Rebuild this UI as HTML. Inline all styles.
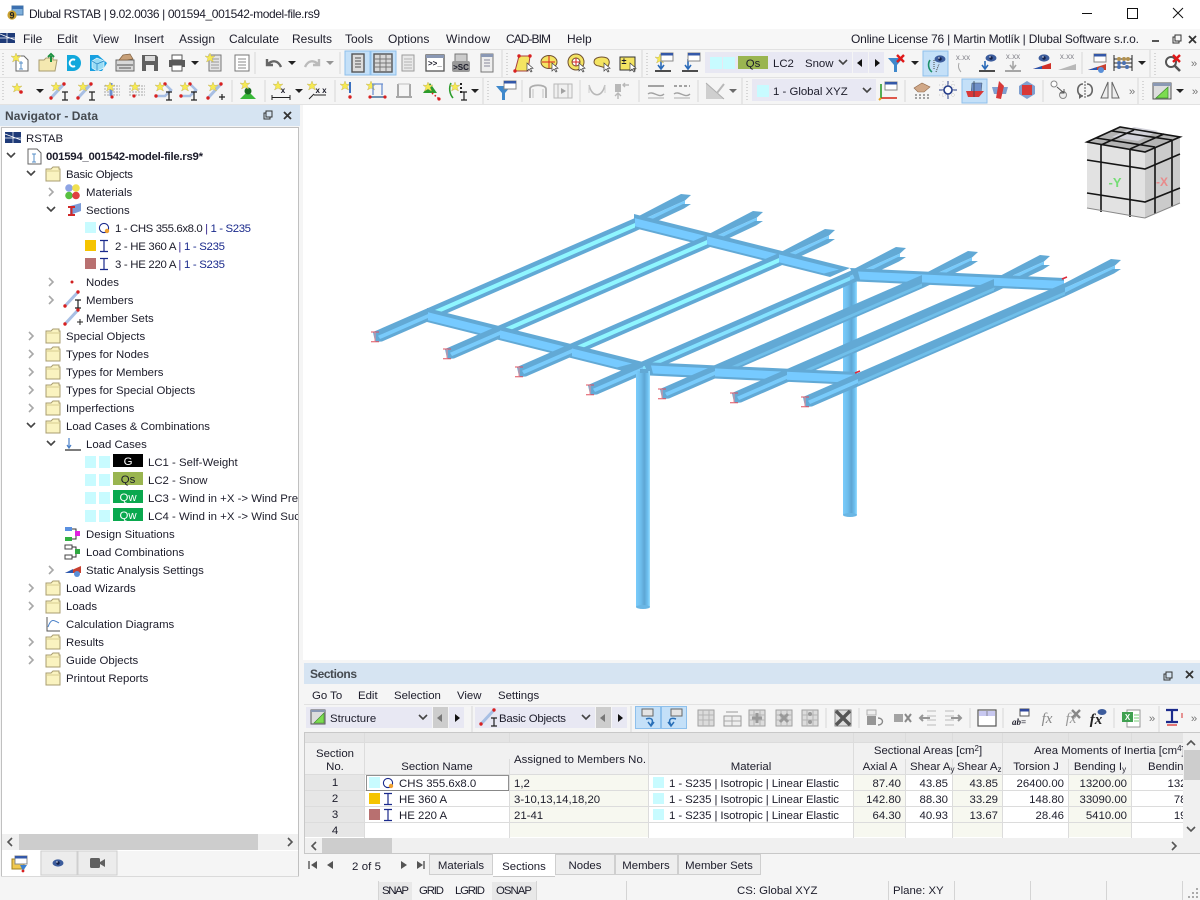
<!DOCTYPE html>
<html><head><meta charset="utf-8"><title>Dlubal RSTAB</title>
<style>
html,body{margin:0;padding:0;background:#f5f5f5;overflow:hidden}
svg{display:block}
text{font-family:"Liberation Sans",sans-serif;font-size:11.4px;fill:#1c1c2a}
.c{text-anchor:middle}.r{text-anchor:end}
.g{fill:#b4b4b4}.gs{stroke:#a8a8a8;fill:none}
</style></head><body>
<svg xmlns="http://www.w3.org/2000/svg" width="1200" height="900" viewBox="0 0 1200 900">
<defs>
<clipPath id="navclip"><rect x="0" y="128" width="298" height="705"/></clipPath>
<clipPath id="tblclip"><rect x="304" y="733" width="879" height="105"/></clipPath>
<linearGradient id="col" x1="0" x2="1" y1="0" y2="0"><stop offset="0" stop-color="#7accfb"/><stop offset=".35" stop-color="#6dbdec"/><stop offset=".6" stop-color="#5ea6d4"/><stop offset=".85" stop-color="#6fc2f2"/><stop offset="1" stop-color="#9adfff"/></linearGradient>
<g id="dd"><path d="M-4-2H4L0 2z" fill="#222"/></g>
<g id="chevd"><path d="M-4-2L0 2L4-2" fill="none" stroke="#444" stroke-width="1.6"/></g>
<g id="chevr"><path d="M-2-4L2 0L-2 4" fill="none" stroke="#a8a8a8" stroke-width="1.6"/></g>
<g id="spark"><path d="M0-5L1.3-1.6L5-2L2 .5L3.5 4L0 2L-3.5 4L-2 .5L-5-2L-1.3-1.6z" fill="#f6ea52" stroke="#c8b860" stroke-width=".5"/></g>
<g id="folder"><path d="M-7-5H-2L0-7H6V-5H7V7H-7z" fill="#faf3c0" stroke="#a89c70"/><path d="M-7-3H7" stroke="#d8cc90"/></g>
<g id="gcol"><rect x="-8" y="-8" width="16" height="16" fill="#dcdcdc" stroke="#a0a0a0"/><path d="M-8-3H8M-8 2H8M-3-8V8M3-8V8" stroke="#b4b4b4"/></g>
<g id="gdoc"><rect x="-6" y="-8" width="12" height="16" fill="#e4e4e4" stroke="#777"/><path d="M-4-4H4M-4-1H4M-4 2H4M-4 5H4" stroke="#999"/></g>
<g id="member"><path d="M-7 7L6-7" stroke="#a8bfe4" stroke-width="3"/><circle cx="-7" cy="7" r="1.7" fill="#d82020"/><circle cx="6" cy="-7" r="1.7" fill="#d82020"/></g>
<g id="ibeam"><path d="M-3-4H3M-3 4H3M0-4V4" stroke="#222" stroke-width="1.2" fill="none"/></g>
<g id="ibeamb"><path d="M-4-5.5H4M-4 5.5H4M0-5.5V5.5" stroke="#1a2a8c" stroke-width="1.2" fill="none"/></g>
<g id="win"><rect x="-6" y="-4" width="12" height="8" fill="#fff" stroke="#888"/><rect x="-6" y="-4" width="12" height="2.5" fill="#3458a8"/></g>
<g id="cur"><path d="M0 0L0 8L2 6L4 9L5 8.4L3.4 5.5L6 5.2z" fill="#fff" stroke="#444" stroke-width=".7"/></g>
<g id="eye"><ellipse rx="5.5" ry="3.6" fill="#3c5c9c"/><circle r="1.7" fill="#12204c"/><circle cx="-1" cy="-1" r=".7" fill="#fff"/></g>

<g id="bFront"><path d="M0 0L55-24V-10.5L9 9.5L2 10z" fill="#62a9d5"/><path d="M5 3.8L55-18V-14L7 7z" fill="#79cbfb"/>
<path d="M-2 0H6M-2 9.8H6" stroke="#e0505e" stroke-width="1" fill="none"/><path d="M2 0V9.8" stroke="#ef8a94" stroke-width="1"/></g>
<g id="bMidC"><path d="M55-24L262-114V-100.5L55-10.5z" fill="#62a9d5"/><path d="M55-19L262-109V-104.5L55-14.5z" fill="#8ff6ff"/></g>
<g id="bMidL"><path d="M55-24L262-114V-100.5L55-10.5z" fill="#62a9d5"/><path d="M55-18.5L262-108.5V-104.5L55-14.5z" fill="#84e2ff"/></g>
<g id="bMid"><path d="M55-24L262-114V-100.5L55-10.5z" fill="#62a9d5"/><path d="M55-15.5L262-105.5V-102.5L55-12.5z" fill="#70bfea"/></g>
<g id="bRear"><path d="M262-114L308-138L318-137L312-131.5L262-109z" fill="#62a9d5"/><path d="M262-109L312-131.5V-128L262-104.5z" fill="#79cbfb"/><path d="M262-104.5L310-128L318-128L311-123.5L262-100.5z" fill="#62a9d5"/></g>
<g id="gL"><path d="M0 0L216 54L196 63L0 14z" fill="#62a9d5"/><path d="M0 4L205 55.5L190 59.5L0 12z" fill="#76caff"/></g>
<g id="gR"><path d="M0 0L214 10V23L6 13.5z" fill="#62a9d5"/><path d="M8 3.5L214 13V21L10 11.5z" fill="#76caff"/></g>
</defs>

<rect width="1200" height="900" fill="#f5f5f5"/>
<!-- title bar -->
<rect width="1200" height="29" fill="#fff"/>
<rect x="12" y="6" width="11" height="9" fill="#7fb0dc" stroke="#4a78a8"/><rect x="12" y="6" width="11" height="3" fill="#3c70b0"/>
<circle cx="12" cy="15" r="4.6" fill="#c8a030"/><text x="12" y="18.5" class="c" style="font-size:9px;font-weight:bold;fill:#222">9</text>
<text x="29" y="18" style="font-size:12px" textLength="291">Dlubal RSTAB | 9.02.0036 | 001594_001542-model-file.rs9</text>
<path d="M1082 13.5H1092" stroke="#111"/><rect x="1127.5" y="8.5" width="10" height="10" fill="none" stroke="#111"/><path d="M1173 8L1183 18M1183 8L1173 18" stroke="#111"/>

<!-- menu -->
<rect x="0" y="29" width="1200" height="20" fill="#f7f7f7"/>
<rect x="0" y="33" width="15" height="10" fill="#1e3a78"/><path d="M0 38H15M7 33V43M0 34L15 40" stroke="#fff" stroke-width=".7"/>
<g style="font-size:12px">
<text x="23" y="43" style="font-size:12px">File</text><text x="57" y="43" style="font-size:12px">Edit</text><text x="93" y="43" style="font-size:12px">View</text><text x="134" y="43" style="font-size:12px">Insert</text><text x="179" y="43" style="font-size:12px">Assign</text><text x="229" y="43" style="font-size:12px">Calculate</text><text x="292" y="43" style="font-size:12px">Results</text><text x="345" y="43" style="font-size:12px">Tools</text><text x="388" y="43" style="font-size:12px">Options</text><text x="446" y="43" style="font-size:12px" textLength="44">Window</text><text x="506" y="43" style="font-size:12px" textLength="45">CAD-BIM</text><text x="567" y="43" style="font-size:12px">Help</text>
<text x="851" y="43" style="font-size:12px" textLength="288">Online License 76 | Martin Motlík | Dlubal Software s.r.o.</text>
</g>
<path d="M1152 41H1159" stroke="#555" stroke-width="2"/><rect x="1173" y="37" width="6" height="6" fill="none" stroke="#333"/><rect x="1175" y="35" width="6" height="6" fill="#f7f7f7" stroke="#333"/>
<path d="M1189 36L1196 43M1196 36L1189 43" stroke="#333" stroke-width="1.8"/>
<path d="M0 49.5H1200M0 77.5H1200M0 104.5H1200" stroke="#e2e2e2"/>
<g stroke="#b8b8b8" stroke-dasharray="1 2"><path d="M3 53V75M3 81V102M507 53V75M647 53V75M488 81V102M747 81V102M1155 53V75M1143 81V102"/></g>
<g stroke="#d6d6d6"><path d="M255 52V74M340 52V74M502 50V77M642 50V77M1082 52V74M1150 50V77M232 80V102M265 80V102M335 80V102M483 78V104M522 80V102M580 80V102M639 80V102M698 80V102M742 78V104M905 80V102M1043 80V102M1138 78V104"/></g>

<!-- toolbar 1 -->
<rect x="345" y="51" width="25" height="24" fill="#c4e0f8" stroke="#8ec0ec"/><rect x="371" y="51" width="25" height="24" fill="#c4e0f8" stroke="#8ec0ec"/>
<rect x="923" y="51" width="25" height="25" fill="#c4e0f8" stroke="#8ec0ec"/>
<rect x="962" y="79" width="25" height="24" fill="#c4e0f8" stroke="#8ec0ec"/>
<g transform="translate(21,63)"><path d="M-5-7H3L7-3V8H-5z" fill="#fff" stroke="#666"/><path d="M-2 0H2M0-2V6M-2 6H2" stroke="#5a90c8"/><use href="#spark" x="-5" y="-5"/></g>
<g transform="translate(48,63)"><path d="M-9-3H-4L-2-5H5V-3H9L7 8H-9z" fill="#f4e8b0" stroke="#a89c70"/><path d="M3-1V-7M0-6L3-9L6-6" stroke="#1c9040" stroke-width="2" fill="none"/></g>
<g transform="translate(73,63)"><path d="M-6-8H0A8 8 0 0 1 0 8H-6z" fill="#12a8dc"/><path d="M2-3A3.5 3.5 0 1 0 2 3" stroke="#fff" stroke-width="2" fill="none"/></g>
<g transform="translate(98,63)"><path d="M-8-8H0L9 0L4 8H-8z" fill="#18a0e0"/><path d="M-1-5L6-2V5L-1 8L-6 5V-2z" fill="#9adcf4" stroke="#fff" stroke-width=".6"/><path d="M-6-2L-1 1L6-2M-1 1V8" stroke="#2080c0" stroke-width=".7" fill="none"/></g>
<g transform="translate(125,63)"><path d="M-9-3H9V8H-9z" fill="#d8d8d8" stroke="#666"/><path d="M-8 2H8M-6 5H6" stroke="#555"/><path d="M-6-3L-2-8L5-9L8-4L2-3z" fill="#c8a078" stroke="#806040" stroke-width=".7"/></g>
<g transform="translate(150,63)"><path d="M-8-8H6L8-6V8H-8z" fill="#606060"/><rect x="-5" y="-7" width="10" height="5" fill="#dcdcdc"/><rect x="-4" y="2" width="8" height="6" fill="#f0f0f0"/></g>
<g transform="translate(177,63)"><rect x="-5" y="-8" width="10" height="5" fill="#fff" stroke="#555"/><path d="M-8-3H8V4H-8z" fill="#5a5a5a"/><rect x="-5" y="2" width="10" height="6" fill="#fff" stroke="#555"/></g><use href="#dd" x="195" y="63"/>
<g transform="translate(215,63)"><use href="#gdoc"/><use href="#spark" x="-5" y="-5"/></g>
<g transform="translate(242,63)"><rect x="-7" y="-8" width="14" height="16" fill="#fff" stroke="#777"/><path d="M-4-4H4M-4-1H4M-4 2H4M-4 5H4" stroke="#888"/></g>
<g transform="translate(274,63)" fill="none" stroke="#666" stroke-width="2.4"><path d="M7 4C4-3-2-3-6 1M-7-4V2H-1"/></g><use href="#dd" x="292" y="63"/>
<g transform="translate(312,63)" fill="none" stroke="#bbb" stroke-width="2.4"><path d="M-7 4C-4-3 2-3 6 1M7-4V2H1"/></g><g opacity=".45"><use href="#dd" x="330" y="63"/></g>
<g transform="translate(358,63)"><rect x="-6" y="-9" width="12" height="18" fill="#dcdcdc" stroke="#555" stroke-width="1.4"/><path d="M-3-5H3M-3-2H3M-3 1H3M-3 4H3" stroke="#555"/></g>
<g transform="translate(383,63)"><rect x="-9" y="-9" width="18" height="18" fill="#d8d8d8" stroke="#555" stroke-width="1.4"/><path d="M-9-4H9M-9 0H9M-9 4H9M-3-9V9M3-9V9" stroke="#777"/></g>
<g transform="translate(408,63)" opacity=".7"><use href="#gdoc"/></g>
<g transform="translate(435,63)"><rect x="-9" y="-8" width="18" height="16" fill="#fff" stroke="#555" stroke-width="1.3"/><rect x="-9" y="-8" width="18" height="3" fill="#8a98b4"/><text x="-7" y="3" style="font-size:8px;font-weight:bold">&gt;&gt;_</text></g>
<g transform="translate(461,63)"><rect x="-6" y="-9" width="12" height="8" fill="#ccc" stroke="#777"/><rect x="-9" y="-2" width="18" height="11" rx="2" fill="#999"/><text x="0" y="7" class="c" style="font-size:8px;font-weight:bold">&gt;SC</text></g>
<g transform="translate(487,63)"><rect x="-6" y="-9" width="12" height="18" fill="#eee" stroke="#777"/><rect x="-6" y="-9" width="12" height="3" fill="#8a98b4"/><path d="M-3-3H3M-3 0H3M-3 3H3" stroke="#889"/></g>
<g transform="translate(525,63)"><path d="M-6-7H5L3 8H-10z" fill="#f4e462" stroke="#a84040"/><circle cx="-6" cy="-7" r="1.7" fill="#d82020"/><circle cx="5" cy="-7" r="1.7" fill="#d82020"/><circle cx="-10" cy="8" r="1.7" fill="#d82020"/><use href="#cur" x="2" y="0"/></g>
<g transform="translate(550,63)"><ellipse cx="-1" cy="-1" rx="8" ry="6.5" fill="#f4e462" stroke="#705030"/><path d="M-8-1H5M-1-7V5" stroke="#d82020"/><use href="#cur" x="2" y="0"/></g>
<g transform="translate(577,63)"><circle cx="-1" cy="-1" r="8" fill="#f4e462" stroke="#705030"/><circle cx="-1" cy="-1" r="4" fill="#fff" stroke="#705030"/><path d="M-5-1H3M-1-5V3" stroke="#d82020"/><use href="#cur" x="2" y="0"/></g>
<g transform="translate(602,63)"><path d="M-8-1C-8-6 0-7 5-5C9-2 7 3 4 5L-3 3C-6 3-8 1-8-1z" fill="#f4e462" stroke="#705030"/><use href="#cur" x="2" y="0"/></g>
<g transform="translate(628,63)"><rect x="-8" y="-6" width="15" height="13" fill="#f4e462" stroke="#333"/><text x="-4" y="1" class="c" style="font-size:9px;font-weight:bold">±</text><use href="#cur" x="2" y="0"/></g>
<g transform="translate(663,63)"><path d="M-8 8H8" stroke="#222" stroke-width="1.6"/><path d="M-2-4V5M-5 2L-2 6L1 2" stroke="#2a6ab8" stroke-width="1.6" fill="none"/><use href="#spark" x="-3" y="-4"/><use href="#win" x="4" y="-6"/></g>
<g transform="translate(690,63)"><path d="M-8 8H8" stroke="#222" stroke-width="1.6"/><path d="M-2-4V5M-5 2L-2 6L1 2" stroke="#2a6ab8" stroke-width="1.6" fill="none"/><use href="#win" x="4" y="-6"/></g>

<rect x="705" y="52" width="147" height="21" fill="#e8e8f3"/>
<rect x="710" y="57" width="12" height="12" fill="#c8fbff"/><rect x="723" y="57" width="12" height="12" fill="#c8fbff"/><rect x="738" y="56" width="30" height="13" fill="#9ab550"/><text x="753" y="67" class="c">Qs</text>
<text x="773" y="67">LC2</text><text x="805" y="67">Snow</text><use href="#chevd" x="843" y="62"/>
<rect x="853" y="52" width="15" height="21" fill="#e8e8f3"/><rect x="869" y="52" width="15" height="21" fill="#e8e8f3"/><path d="M862 59V67L857 63z" fill="#111"/><path d="M875 59V67L880 63z" fill="#111"/>
<g transform="translate(897,64)"><path d="M-9-6H6L0 1V8L-3 8V1z" fill="#3e88cc"/><path d="M0-9L7-2M7-9L0-2" stroke="#e01818" stroke-width="2.4"/></g><use href="#dd" x="915" y="63"/>
<g transform="translate(936,63)"><use href="#eye" x="4" y="-4"/><path d="M-4 9A9 9 0 0 1-6-3" stroke="#1c9068" stroke-width="1.6" fill="none"/><path d="M-2-3V6M0 9L3 1" stroke="#444" stroke-dasharray="1 1"/></g>
<g opacity=".55"><g transform="translate(963,63)"><text x="0" y="-3" class="c" style="font-size:8px">x.xx</text><path d="M-2 9A9 9 0 0 1-4 0" stroke="#666" fill="none"/></g></g>
<g transform="translate(987,63)"><use href="#eye" transform="translate(4,-5)"/><path d="M-8 8H8" stroke="#222" stroke-width="1.6"/><path d="M-2-2V5M-5 2L-2 6L1 2" stroke="#2a6ab8" stroke-width="1.6" fill="none"/></g>
<g opacity=".55" transform="translate(1013,63)"><text x="0" y="-4" class="c" style="font-size:8px">x.xx</text><path d="M-8 8H8" stroke="#444" stroke-width="1.6"/><path d="M0-2V5M-3 2L0 6L3 2" stroke="#666" stroke-width="1.6" fill="none"/></g>
<g transform="translate(1042,63)"><use href="#eye" transform="translate(2,-5)"/><path d="M-9 6L9 0V6z" fill="#d03028"/><path d="M-9 6L0 3V6z" fill="#2a58b0"/></g>
<g opacity=".55" transform="translate(1067,63)"><text x="0" y="-4" class="c" style="font-size:8px">x.xx</text><path d="M-9 7L9 1V7z" fill="#888"/></g>
<g transform="translate(1097,63)"><path d="M-9 7L9 1V7z" fill="#c84030"/><path d="M-9 7L0 4V7z" fill="#2a58b0"/><use href="#win" x="3" y="-5"/><circle cx="4" cy="7" r="3" fill="#5a90d8"/></g>
<g transform="translate(1123,63)"><path d="M-9-8V8M9-8V8M-9-4H9M-9 0H9M-9 4H9" stroke="#222"/><circle cx="-4" cy="-4" r="2" fill="#b09050"/><circle cx="1" cy="-4" r="2" fill="#b09050"/><circle cx="5" cy="-4" r="2" fill="#b09050"/><circle cx="-4" cy="0" r="2" fill="#4a70b0"/><circle cx="1" cy="0" r="2" fill="#4a70b0"/><circle cx="-4" cy="4" r="2" fill="#4a70b0"/><circle cx="4" cy="4" r="2" fill="#4a70b0"/></g><use href="#dd" x="1142" y="63"/>
<g transform="translate(1173,63)"><circle cx="-2" cy="-1" r="5" fill="#fff" stroke="#555" stroke-width="2"/><path d="M2 3L7 8" stroke="#555" stroke-width="2.6"/><path d="M0-8L7-1M7-8L0-1" stroke="#e01818" stroke-width="2.4"/></g>
<text x="1194" y="67" class="c" style="fill:#777">»</text>

<!-- toolbar 2 -->
<g transform="translate(17,90)"><use href="#spark" x="0" y="-2"/><circle cx="4" cy="2" r="1.8" fill="#d82020"/></g><use href="#dd" x="40" y="91"/>
<g transform="translate(58,91)"><use href="#member"/><use href="#spark" x="-2" y="-4"/><use href="#ibeam" x="7" y="5"/></g>
<g transform="translate(85,91)"><use href="#member"/><use href="#spark" x="-2" y="-4"/><use href="#ibeam" x="7" y="5"/></g>
<g transform="translate(112,90)"><path d="M-8-4H8M-8-1H8M-8 2H8M-8 5H8" stroke="#a8a8a8" stroke-dasharray="2 1"/><path d="M-1-7V6" stroke="#6c90d0" stroke-width="3"/><use href="#spark" x="-2" y="-3"/><circle cx="0" cy="7" r="1.6" fill="#d82020"/></g>
<g transform="translate(137,90)"><path d="M-8-4H8M-8-1H8M-8 2H8M-8 5H8" stroke="#a8a8a8" stroke-dasharray="2 1"/><use href="#spark" x="-2" y="-3"/><circle cx="-3" cy="6" r="1.6" fill="#d82020"/></g>
<g transform="translate(163,90)"><path d="M-6 6H2L8 0L2-6" stroke="#a8bfe4" stroke-width="2.6" fill="none"/><circle cx="-7" cy="6" r="1.7" fill="#d82020"/><circle cx="2" cy="-6" r="1.7" fill="#d82020"/><use href="#spark" x="-3" y="-3"/><use href="#ibeam" x="6" y="6"/></g>
<g transform="translate(188,90)"><path d="M-6 6H2L8 0L2-6" stroke="#a8bfe4" stroke-width="2.6" fill="none"/><circle cx="-7" cy="6" r="1.7" fill="#d82020"/><circle cx="2" cy="-6" r="1.7" fill="#d82020"/><use href="#spark" x="-3" y="-3"/><use href="#ibeam" x="6" y="6"/></g>
<g transform="translate(215,91)"><use href="#member"/><use href="#spark" x="-2" y="-4"/><path d="M4 6H10M7 3V9" stroke="#222" stroke-width="1.2"/></g>
<g transform="translate(248,90)"><path d="M-8 9L0 1L8 9z" fill="#38b838"/><circle cy="1" r="3.5" fill="#1a6a20"/><use href="#spark" x="-3" y="-5"/></g>
<g transform="translate(281,91)"><use href="#spark" x="-3" y="-5"/><text x="2" y="2" class="c" style="font-size:8px;font-weight:bold">x</text><path d="M-9 4V9M9 4V9M-9 6.5H9" stroke="#222"/></g><use href="#dd" x="299" y="91"/>
<g transform="translate(317,91)"><use href="#spark" x="-5" y="-5"/><text x="4" y="2" class="c" style="font-size:8px;font-weight:bold">x x</text><path d="M-8 8L-3 3M-3 4H9" stroke="#222"/></g>
<g transform="translate(348,90)"><use href="#spark" x="-3" y="-4"/><path d="M2-8V3" stroke="#3a70c0" stroke-width="2"/><circle cx="2" cy="7" r="1.7" fill="#d82020"/></g>
<g transform="translate(377,90)"><use href="#spark" x="-6" y="-4"/><path d="M-5-6H6M-4-6V5M5-6V5" stroke="#6c90d0" stroke-width="1.3" fill="none"/><path d="M-8 7H9" stroke="#7090b0" stroke-width="2"/><circle cx="-7" cy="7" r="1.6" fill="#d82020"/><circle cx="8" cy="7" r="1.6" fill="#d82020"/></g>
<g transform="translate(404,90)" opacity=".7"><path d="M-6-6V6M6-6V6M-8 7H8" stroke="#888" stroke-width="2" fill="none"/><path d="M-6-6H6" stroke="#aaa"/></g>
<g transform="translate(430,90)"><path d="M-7 3L0-7L7 3z" fill="#2c9c2c"/><use href="#spark" x="-2" y="-3"/><path d="M2 3L8 8" stroke="#d82020" stroke-dasharray="1.5 2" stroke-width="1.6"/><circle cx="9" cy="9" r="1.6" fill="#d82020"/></g>
<g transform="translate(457,90)"><path d="M-6-7A14 14 0 0 0-4 8" stroke="#2c9c2c" stroke-width="1.6" fill="none"/><use href="#spark" x="-2" y="-3"/><path d="M4-7V5" stroke="#222" stroke-dasharray="2 2" stroke-width="2"/><use href="#ibeam" x="7" y="6"/></g><use href="#dd" x="475" y="91"/>
<g transform="translate(505,91)"><path d="M-9-5H6L0 2V9L-3 9V2z" fill="#3e88cc"/><use href="#win" x="5" y="-6"/></g>
<g opacity=".65">
<g transform="translate(538,91)"><path d="M-8 7V-2C-8-7 8-7 8-2V7" fill="none" stroke="#888" stroke-width="1.8"/><path d="M-5 7V-2M5 7V-2" stroke="#aaa"/></g>
<g transform="translate(563,91)"><rect x="-9" y="-7" width="18" height="14" fill="#eee" stroke="#999"/><path d="M-5-7V7M5-7V7" stroke="#999"/><path d="M-2-3L3 0L-2 3z" fill="#777"/></g>
<g transform="translate(597,90)"><path d="M-8-5C-5 8 5 8 8-5" stroke="#999" stroke-width="1.6" fill="none"/><path d="M-8-5V3M8-5V3" stroke="#bbb"/></g>
<g transform="translate(620,90)"><path d="M-5-6H1V2H-5z" fill="#999"/><path d="M-2 3V9M-5 6L-2 3L1 6" stroke="#999" stroke-width="1.4" fill="none"/><path d="M9-5H3M5-7L3-5L5-3" stroke="#999" stroke-width="1.4" fill="none"/></g>
<g transform="translate(656,90)"><path d="M-8-4H8" stroke="#777" stroke-width="2"/><path d="M-8 4C-3 0 3 9 8 4" stroke="#777" fill="none" stroke-width="1.4"/><path d="M-8 8H8" stroke="#888"/></g>
<g transform="translate(682,90)"><path d="M-8-4H8" stroke="#777" stroke-width="2" stroke-dasharray="3 2"/><path d="M-8 4C-3 0 3 9 8 4" stroke="#777" fill="none" stroke-width="1.4"/><path d="M-8 8H8" stroke="#888"/></g>
<g transform="translate(715,91)"><path d="M-9-8V8H9z" fill="#bbb"/><path d="M-9-8L9 8" stroke="#888"/><path d="M2 2L9-7" stroke="#999" stroke-width="2"/></g>
<use href="#dd" x="733" y="91"/>
</g>
<rect x="752" y="79" width="124" height="22" fill="#e8e8f3"/><rect x="757" y="85" width="12" height="12" fill="#c8fbff"/>
<text x="773" y="95">1 - Global XYZ</text><use href="#chevd" x="867" y="90"/>
<g transform="translate(888,91)"><path d="M-7 7H9" stroke="#d83020" stroke-width="1.6"/><path d="M-7 7V-7" stroke="#2c9c2c" stroke-width="1.6"/><path d="M-7 7L-9 9" stroke="#e8a020" stroke-width="2"/><use href="#win" x="3" y="-5"/></g>
<g transform="translate(922,90)"><g fill="#888"><circle cx="-6" cy="5" r="1"/><circle cx="-2" cy="5" r="1"/><circle cx="2" cy="5" r="1"/><circle cx="6" cy="5" r="1"/><circle cx="-6" cy="8" r="1"/><circle cx="-2" cy="8" r="1"/><circle cx="2" cy="8" r="1"/><circle cx="6" cy="8" r="1"/></g><path d="M-8-2L0-7L8-3L2 2L-4 2z" fill="#d0a888" stroke="#90684a" stroke-width=".6"/></g>
<g transform="translate(948,90)"><path d="M-9 0H9M0-9V9" stroke="#223a88"/><path d="M-9-5H9M-9 5H9M-5-9V9M5-9V9" stroke="#ccc" stroke-dasharray="1 2"/><circle r="4" fill="#fff" stroke="#223a88" stroke-width="1.6"/></g>
<g transform="translate(975,90)"><path d="M-3-7L7-7L6 3H-4z" fill="#6f8fc8" stroke="#456" stroke-width=".5"/><path d="M-9 1H9L4 7H-7z" fill="#d83838"/><path d="M-1-9V7" stroke="#345" stroke-width=".8"/></g>
<g transform="translate(1000,90)"><path d="M-8-3L8-3L6 4L-6 4z" fill="#7f9fd0"/><path d="M-4 8L-1-9L4-4L1 9z" fill="#d83838"/></g>
<g transform="translate(1027,90)"><path d="M-8-4L0-9L8-4L8 4L0 9L-8 4z" fill="#7f9fd0"/><path d="M-5-5H5V5H-5z" fill="#d83838"/></g>
<g transform="translate(1059,90)"><circle cx="-5" cy="-6" r="3" fill="#fff" stroke="#888"/><circle cx="4" cy="5" r="3.5" fill="#eee" stroke="#888"/><path d="M-2-3L5 3M5-1V3H1" stroke="#555" fill="none"/></g>
<g transform="translate(1085,90)"><path d="M-2-6C-9-6-9 6-2 6M2-6C9-6 9 6 2 6" stroke="#666" stroke-width="1.6" fill="none"/><path d="M0-9V9" stroke="#555" stroke-dasharray="2 1"/><path d="M-6 3L-2 6L-6 9z" fill="#666"/></g>
<g transform="translate(1110,90)"><path d="M-2-8L-9 8H-2zM2-8L9 8H2z" fill="#eee" stroke="#666"/></g>
<text x="1132" y="95" class="c" style="fill:#777">»</text>
<g transform="translate(1162,91)"><rect x="-9" y="-8" width="18" height="16" fill="#ddd" stroke="#555"/><rect x="-9" y="-8" width="18" height="3" fill="#8a98b4"/><path d="M-6 7L6-4V7z" fill="#7cdc50" stroke="#3a8a28" stroke-width=".7"/></g><use href="#dd" x="1180" y="91"/>
<text x="1195" y="95" class="c" style="fill:#777">»</text>

<!-- navigator -->
<rect x="0" y="105" width="300" height="21" fill="#d6e4f2"/>
<text x="5" y="120" style="font-size:12px;font-weight:bold;fill:#454a50" textLength="93">Navigator - Data</text>
<rect x="264" y="113" width="6" height="6" fill="none" stroke="#333"/><rect x="266" y="111" width="6" height="6" fill="#d6e4f2" stroke="#333"/>
<path d="M284 112L291 119M291 112L284 119" stroke="#333" stroke-width="1.8"/>
<rect x="1.5" y="127.5" width="297" height="748.5" fill="#fff" stroke="#c0c0c0"/>
<rect x="2" y="834" width="296" height="16" fill="#f0f0f0"/><rect x="19" y="834" width="239" height="16" fill="#cdcdcd"/>
<path d="M12 838L8 842L12 846M288 838L292 842L288 846" stroke="#555" stroke-width="1.6" fill="none"/>
<rect x="2" y="851" width="296" height="25" fill="#f5f5f5"/><rect x="2" y="851" width="38" height="25" fill="#fff"/>
<rect x="41" y="851" width="36" height="24" fill="#ececec" stroke="#cfcfcf"/><rect x="78" y="851" width="39" height="24" fill="#ececec" stroke="#cfcfcf"/>
<g transform="translate(19,863)"><path d="M-7-4H-2L0-6H5V6H-7z" fill="#f0c850" stroke="#a08020"/><use href="#win" x="2" y="-3"/><path d="M1 2L8 2L4 8z" fill="#3a80d0"/><circle cx="4" cy="8" r="1.4" fill="#d82020"/></g>
<use href="#eye" x="58" y="863"/>
<g transform="translate(97,863)"><rect x="-7" y="-5" width="10" height="10" rx="1.5" fill="#606060"/><path d="M3-1L8-4V4L3 1z" fill="#606060"/></g>

<g clip-path="url(#navclip)">
<rect x="5" y="132" width="16" height="11" fill="#1e3a78"/><path d="M5 138H21M13 132V143M5 134L21 140" stroke="#fff" stroke-width=".7"/>
<text x="26" y="142">RSTAB</text>
<use href="#chevd" x="11" y="155"/><g transform="translate(34,156)"><path d="M-6-7H3L7-3V8H-6z" fill="#fff" stroke="#666"/><path d="M-2-2H2M0-2V6M-2 6H2" stroke="#5a90c8"/></g>
<text x="46" y="160" style="font-weight:bold" textLength="157">001594_001542-model-file.rs9*</text>
<use href="#chevd" x="31" y="173"/><use href="#folder" x="53" y="174"/><text x="66" y="178" textLength="67">Basic Objects</text>
<use href="#chevr" x="51" y="192"/><g transform="translate(72,192)"><circle cx="-3" cy="-4" r="3.8" fill="#8ea4e4"/><circle cx="4" cy="-4" r="3.8" fill="#f0e050"/><circle cx="-3" cy="3.5" r="3.8" fill="#58c040"/><circle cx="4" cy="3.5" r="3.8" fill="#e04040"/></g><text x="86" y="196">Materials</text>
<use href="#chevd" x="51" y="209"/><g transform="translate(73,210)"><path d="M-3-4L8-7V1L-3 5z" fill="#7c9cd8"/><path d="M-5-3H2M-5 5H2M-1.5-3V5" stroke="#d02828" stroke-width="2"/></g><text x="86" y="214">Sections</text>
<rect x="85" y="222" width="11" height="11" fill="#c8fbff"/><circle cx="104" cy="228" r="4.6" fill="#fff" stroke="#1a2a8c" stroke-width="1.1"/><circle cx="107" cy="231" r="2.2" fill="#f0a030"/><text x="115" y="232" textLength="136">1 - CHS 355.6x8.0 <tspan style="fill:#3a2a90">|</tspan> <tspan style="fill:#1a2a8c">1 - S235</tspan></text>
<rect x="85" y="240" width="11" height="11" fill="#f5c400"/><use href="#ibeamb" x="104" y="246"/><text x="115" y="250" textLength="110">2 - HE 360 A <tspan style="fill:#3a2a90">|</tspan> <tspan style="fill:#1a2a8c">1 - S235</tspan></text>
<rect x="85" y="258" width="11" height="11" fill="#b87070"/><use href="#ibeamb" x="104" y="264"/><text x="115" y="268" textLength="110">3 - HE 220 A <tspan style="fill:#3a2a90">|</tspan> <tspan style="fill:#1a2a8c">1 - S235</tspan></text>
<use href="#chevr" x="51" y="282"/><circle cx="72" cy="282" r="1.5" fill="#d02020"/><text x="86" y="286">Nodes</text>
<use href="#chevr" x="51" y="300"/><g transform="translate(72,299)"><use href="#member"/><use href="#ibeam" x="6" y="5"/></g><text x="86" y="304">Members</text>
<g transform="translate(72,317)"><use href="#member"/><path d="M5 5H11M8 2V8" stroke="#222"/></g><text x="86" y="322">Member Sets</text>
<use href="#chevr" x="31" y="336"/><use href="#folder" x="53" y="336"/><text x="66" y="340">Special Objects</text>
<use href="#chevr" x="31" y="354"/><use href="#folder" x="53" y="354"/><text x="66" y="358">Types for Nodes</text>
<use href="#chevr" x="31" y="372"/><use href="#folder" x="53" y="372"/><text x="66" y="376">Types for Members</text>
<use href="#chevr" x="31" y="390"/><use href="#folder" x="53" y="390"/><text x="66" y="394">Types for Special Objects</text>
<use href="#chevr" x="31" y="408"/><use href="#folder" x="53" y="408"/><text x="66" y="412">Imperfections</text>
<use href="#chevd" x="31" y="425"/><use href="#folder" x="53" y="426"/><text x="66" y="430" textLength="144">Load Cases &amp; Combinations</text>
<use href="#chevd" x="51" y="443"/><g transform="translate(73,444)"><path d="M-8 6H8" stroke="#444" stroke-width="1.4"/><path d="M-4-6V3M-6 1L-4 4L-2 1" stroke="#4a80c8" stroke-width="1.2" fill="none"/></g><text x="86" y="448">Load Cases</text>
<g fill="#c8fbff"><rect x="85" y="456" width="11" height="12"/><rect x="99" y="456" width="11" height="12"/><rect x="85" y="474" width="11" height="12"/><rect x="99" y="474" width="11" height="12"/><rect x="85" y="492" width="11" height="12"/><rect x="99" y="492" width="11" height="12"/><rect x="85" y="510" width="11" height="12"/><rect x="99" y="510" width="11" height="12"/></g>
<rect x="113" y="454" width="30" height="13" fill="#000"/><text x="128" y="465" class="c" style="fill:#fff">G</text>
<rect x="113" y="472" width="30" height="13" fill="#9ab550"/><text x="128" y="483" class="c">Qs</text>
<rect x="113" y="490" width="30" height="13" fill="#0aa84e"/><text x="128" y="501" class="c" style="fill:#fff">Qw</text>
<rect x="113" y="508" width="30" height="13" fill="#0aa84e"/><text x="128" y="519" class="c" style="fill:#fff">Qw</text>
<text x="148" y="466">LC1 - Self-Weight</text><text x="148" y="484">LC2 - Snow</text><text x="148" y="502">LC3 - Wind in +X -&gt; Wind Pressure</text><text x="148" y="520">LC4 - Wind in +X -&gt; Wind Suction</text>
<g transform="translate(72,534)"><rect x="-7" y="-7" width="7" height="4" fill="#5a90e0"/><rect x="-7" y="3" width="7" height="4" fill="#30b040"/><path d="M0-5H4V5H0" stroke="#333" fill="none"/><rect x="3" y="-3" width="5" height="5" fill="#e020e0"/></g><text x="86" y="538">Design Situations</text>
<g transform="translate(72,552)"><rect x="-7" y="-7" width="7" height="4" fill="#fff" stroke="#444"/><rect x="-7" y="3" width="7" height="4" fill="#fff" stroke="#444"/><path d="M0-5H4V5H0" stroke="#333" fill="none"/><rect x="3" y="-3" width="5" height="5" fill="#30a840"/></g><text x="86" y="556">Load Combinations</text>
<use href="#chevr" x="51" y="570"/><g transform="translate(73,570)"><path d="M-8 3L8-4V3z" fill="#c84030"/><path d="M-8 3L0-1V3z" fill="#2a58b0"/><circle cx="4" cy="4" r="3" fill="#5a90d8"/></g><text x="86" y="574">Static Analysis Settings</text>
<use href="#chevr" x="31" y="588"/><use href="#folder" x="53" y="588"/><text x="66" y="592">Load Wizards</text>
<use href="#chevr" x="31" y="606"/><use href="#folder" x="53" y="606"/><text x="66" y="610">Loads</text>
<g transform="translate(53,624)"><path d="M-6-7V7H7" stroke="#555" fill="none"/><path d="M-5 3C-2-6 1-4 6-1" stroke="#4a80c8" fill="none"/></g><text x="66" y="628">Calculation Diagrams</text>
<use href="#chevr" x="31" y="642"/><use href="#folder" x="53" y="642"/><text x="66" y="646">Results</text>
<use href="#chevr" x="31" y="660"/><use href="#folder" x="53" y="660"/><text x="66" y="664">Guide Objects</text>
<use href="#folder" x="53" y="678"/><text x="66" y="682">Printout Reports</text>
</g>

<!-- 3D view -->
<rect x="303" y="105" width="897" height="555" fill="#fff"/>
<rect x="843" y="277" width="14" height="238" fill="url(#col)"/><ellipse cx="850" cy="515" rx="7" ry="2" fill="#6ab6e4"/>
<use href="#bRear" x="373" y="332"/><use href="#bRear" x="445" y="349"/><use href="#bRear" x="517" y="367"/><use href="#bRear" x="588" y="385"/><use href="#bRear" x="660" y="389"/><use href="#bRear" x="732" y="393"/><use href="#bRear" x="803" y="397"/>
<use href="#gL" x="634" y="214"/><use href="#gR" x="850" y="268"/>
<use href="#bMidC" x="373" y="332"/><use href="#bMidC" x="445" y="349"/><use href="#bMidC" x="517" y="367"/><use href="#bMidL" x="588" y="385"/><use href="#bMid" x="660" y="389"/><use href="#bMid" x="732" y="393"/><use href="#bMid" x="803" y="397"/>
<use href="#gL" x="427" y="308"/><use href="#gR" x="643" y="362"/>
<use href="#bFront" x="373" y="332"/><use href="#bFront" x="445" y="349"/><use href="#bFront" x="517" y="367"/><use href="#bFront" x="588" y="385"/><use href="#bFront" x="660" y="389"/><use href="#bFront" x="732" y="393"/><use href="#bFront" x="803" y="397"/>
<path d="M1062 279L1067 277M855 373L860 371" stroke="#e02838" stroke-width="1.5"/>
<rect x="636" y="371" width="14" height="236" fill="url(#col)"/><ellipse cx="643" cy="607" rx="7" ry="2" fill="#6ab6e4"/><rect x="640" y="369" width="8" height="4" fill="#62a9d5"/>

<!-- cube -->
<path d="M1087 142L1120 127L1180 137L1145 152z" fill="#b4b4b4"/><path d="M1112 137L1134 127L1158 131L1138 141z" fill="#d2d2da"/>
<path d="M1087 142L1145 152V218L1087 208z" fill="#e2e2e2"/><path d="M1145 152L1180 137V203L1145 218z" fill="#cbcbcb"/>
<g stroke="#151515" stroke-width="1.6" fill="none"><path d="M1087 142L1120 127L1180 137L1145 152zM1145 152L1180 137"/><path d="M1101 145V212M1130 149V217M1155 148V214M1172 141V207"/><path d="M1087 160L1145 169L1180 154M1087 193L1145 202L1180 188"/><path d="M1101 145L1134 130M1130 149L1164 134M1096 138L1155 147M1112 131L1172 140"/></g>
<path d="M1087 208L1145 218L1180 203" stroke="#888" fill="none"/>
<text x="1115" y="187" class="c" style="font-size:13px;font-weight:bold;fill:#74dc74">-Y</text>
<text x="1162" y="186" class="c" style="font-size:12px;font-weight:bold;fill:#e88a8a">-X</text>

<!-- Sections panel -->
<rect x="304" y="663" width="896" height="21" fill="#d6e4f2"/>
<text x="310" y="678" style="font-size:12px;font-weight:bold;fill:#454a50" textLength="47">Sections</text>
<rect x="1164" y="674" width="6" height="6" fill="none" stroke="#333"/><rect x="1166" y="672" width="6" height="6" fill="#d6e4f2" stroke="#333"/>
<path d="M1186 671L1193 678M1193 671L1186 678" stroke="#333" stroke-width="1.8"/>
<text x="312" y="699">Go To</text><text x="358" y="699">Edit</text><text x="394" y="699">Selection</text><text x="457" y="699">View</text><text x="498" y="699">Settings</text>
<path d="M304 704.5H1200" stroke="#e2e2e2"/><path d="M304 732.5H1200" stroke="#c8c8c8"/>
<rect x="306" y="707" width="126" height="21" fill="#e8e8f3"/><g transform="translate(318,717)"><rect x="-7" y="-7" width="14" height="14" fill="#ddd" stroke="#555"/><path d="M-4 6L6-4V6z" fill="#7cdc50" stroke="#3a8a28" stroke-width=".6"/><rect x="-7" y="-7" width="14" height="2" fill="#8a98b4"/></g>
<text x="330" y="722">Structure</text><use href="#chevd" x="423" y="717"/>
<rect x="433" y="707" width="15" height="21" fill="#cdcdcd"/><rect x="449" y="707" width="15" height="21" fill="#e8e8f3"/><path d="M442 714V722L437 718z" fill="#777"/><path d="M455 714V722L460 718z" fill="#111"/>
<path d="M472 706V732M631 706V732M826 708V728M859 708V728M970 708V728M1003 708V728M1114 708V728M1159 706V732" stroke="#d6d6d6"/>
<rect x="475" y="707" width="120" height="21" fill="#e8e8f3"/><g transform="translate(488,717)"><use href="#member"/><use href="#ibeam" x="6" y="5"/></g>
<text x="499" y="722" textLength="67">Basic Objects</text><use href="#chevd" x="586" y="717"/>
<rect x="596" y="707" width="15" height="21" fill="#cdcdcd"/><rect x="612" y="707" width="15" height="21" fill="#e8e8f3"/><path d="M605 714V722L600 718z" fill="#777"/><path d="M618 714V722L623 718z" fill="#111"/>
<rect x="635.5" y="706.5" width="25" height="22" fill="#c4e0f8" stroke="#8ec0ec"/><rect x="661.5" y="706.5" width="25" height="22" fill="#c4e0f8" stroke="#8ec0ec"/>
<g transform="translate(648,717)"><rect x="-6" y="-8" width="11" height="7" fill="#e4e4e4" stroke="#666"/><path d="M-2 2C4 0 6 3 3 8M0 5L3 9L6 5" stroke="#2a70b8" stroke-width="1.5" fill="none"/></g>
<g transform="translate(674,717)"><rect x="-3" y="-8" width="11" height="7" fill="#e4e4e4" stroke="#666"/><path d="M2 2C-4 0-6 3-3 8M0 5L-3 9L-6 5" stroke="#2a70b8" stroke-width="1.5" fill="none"/></g>
<use href="#gcol" x="706" y="718"/>
<g transform="translate(732,719)"><rect x="-8" y="-3" width="17" height="10" fill="#eee" stroke="#999"/><path d="M-8 2H9M0-3V7" stroke="#aaa"/><path d="M-6-7H6" stroke="#999"/></g>
<use href="#gcol" x="757" y="718"/><path d="M757 713V723M752 718H762" stroke="#999" stroke-width="3"/>
<use href="#gcol" x="784" y="718"/><path d="M780 714L788 722M788 714L780 722" stroke="#999" stroke-width="3"/>
<use href="#gcol" x="810" y="718"/><circle cx="810" cy="714" r="2" fill="#999"/><circle cx="810" cy="722" r="2" fill="#999"/>
<g transform="translate(843,718)"><rect x="-8" y="-8" width="16" height="16" fill="#ddd" stroke="#888"/><path d="M-7-7L7 7M7-7L-7 7" stroke="#555" stroke-width="3.4"/></g>
<g opacity=".75"><g transform="translate(875,718)"><rect x="-8" y="-2" width="9" height="9" fill="#777"/><rect x="-8" y="-8" width="9" height="5" fill="#eee" stroke="#999"/><path d="M3 0C9 0 9 7 3 7" stroke="#666" stroke-width="1.4" fill="none"/></g>
<g transform="translate(902,718)"><rect x="-8" y="-4" width="9" height="8" fill="#888"/><path d="M3-4L9 4M9-4L3 4" stroke="#666" stroke-width="2"/></g>
<g transform="translate(928,718)"><path d="M-1-7H8M-1 7H8M-1-2H8M-1 2H8" stroke="#aaa"/><path d="M-8 0H2M-5-3L-8 0L-5 3" stroke="#777" stroke-width="2" fill="none"/></g>
<g transform="translate(953,718)"><path d="M-8-7H1M-8 7H1M-8-2H1M-8 2H1" stroke="#aaa"/><path d="M-2 0H8M5-3L8 0L5 3" stroke="#777" stroke-width="2" fill="none"/></g></g>
<g transform="translate(987,718)"><rect x="-9" y="-8" width="18" height="16" fill="#fff" stroke="#555" stroke-width="1.2"/><rect x="-8" y="-7" width="16" height="5" fill="#c8c8f0"/><path d="M0-7V-2" stroke="#889"/></g>
<g transform="translate(1020,718)"><rect x="0" y="-9" width="9" height="7" fill="#fff" stroke="#555"/><rect x="0" y="-9" width="9" height="2.5" fill="#30489c"/><text x="-1" y="7" class="c" style="font:italic bold 9px 'Liberation Serif',serif">ab=</text></g>
<text x="1047" y="723" class="c" style="font:italic 15px 'Liberation Serif',serif;fill:#888">fx</text>
<text x="1071" y="723" class="c" style="font:italic 15px 'Liberation Serif',serif;fill:#999">fx</text><path d="M1072 710L1080 718M1080 710L1072 718" stroke="#888" stroke-width="2.4"/>
<text x="1096" y="724" class="c" style="font:italic bold 15px 'Liberation Serif',serif;fill:#222">fx</text><ellipse cx="1102" cy="712" rx="4.5" ry="3" fill="#3c5c9c"/>
<g transform="translate(1131,718)"><rect x="-4" y="-8" width="13" height="17" fill="#fff" stroke="#999"/><rect x="-9" y="-6" width="11" height="10" fill="#3fa050"/><text x="-3.5" y="2" class="c" style="font-size:8px;font-weight:bold;fill:#fff">X</text><path d="M3-3H8M3 0H8M3 3H8" stroke="#7c7"/></g>
<text x="1152" y="722" class="c" style="fill:#777">»</text>
<g transform="translate(1172,717)"><path d="M-6-7H6M-6 5H6M0-7V5" stroke="#1a2a8c" stroke-width="2.2" fill="none"/><path d="M-5 8H5" stroke="#d83030" stroke-width="1.3"/><path d="M10-4V1" stroke="#d83030"/></g>
<text x="1194" y="722" class="c" style="fill:#777">»</text>

<!-- table -->
<rect x="304" y="733" width="879" height="105" fill="#fff"/>
<rect x="304" y="733" width="879" height="9" fill="#e4e4e4"/>
<rect x="304" y="743" width="879" height="31" fill="#f1f1f1"/>
<rect x="304" y="743" width="60" height="94" fill="#e6e6e6"/><rect x="304" y="743" width="60" height="31" fill="#f1f1f1"/>
<g fill="#f7f8f0"><rect x="510" y="775" width="138" height="62"/><rect x="854" y="775" width="51" height="62"/><rect x="953" y="775" width="49" height="62"/><rect x="1069" y="775" width="62" height="62"/></g>
<g stroke="#dcdcdc" fill="none">
<path d="M304 742.5H1183M304 774.5H1183M304 790.5H1183M304 806.5H1183M304 822.5H1183"/>
<path d="M364.5 733V838M509.5 733V742M509.5 759V838M648.5 733V838M853.5 733V838M905.5 733V742M905.5 759V838M952.5 733V742M952.5 759V838M1002.5 733V838M1068.5 733V742M1068.5 759V838M1131.5 733V742M1131.5 759V838"/>
</g>
<g clip-path="url(#tblclip)">
<text x="335" y="757" class="c">Section</text><text x="335" y="770" class="c">No.</text>
<text x="437" y="770" class="c">Section Name</text><text x="514" y="763" textLength="132">Assigned to Members No.</text><text x="751" y="770" class="c">Material</text>
<text x="928" y="754" class="c">Sectional Areas [cm<tspan dy="-3" style="font-size:8px">2</tspan><tspan dy="3">]</tspan></text>
<text x="1034" y="754">Area Moments of Inertia [cm<tspan dy="-3" style="font-size:8px">4</tspan><tspan dy="3">]</tspan></text>
<text x="880" y="770" class="c">Axial A</text><text x="910" y="770">Shear A<tspan style="font-size:8px" dy="2">y</tspan></text><text x="957" y="770">Shear A<tspan style="font-size:8px" dy="2">z</tspan></text><text x="1036" y="770" class="c">Torsion J</text><text x="1100" y="770" class="c">Bending I<tspan style="font-size:8px" dy="2">y</tspan></text><text x="1148" y="770">Bending Iz</text>
<text x="335" y="786" class="c">1</text><text x="335" y="802" class="c">2</text><text x="335" y="818" class="c">3</text><text x="335" y="834" class="c">4</text>
<rect x="366.5" y="775.5" width="142" height="15" fill="#fff" stroke="#222" stroke-dasharray="1 1"/>
<rect x="369" y="777" width="11" height="11" fill="#c8fbff"/><circle cx="388" cy="783" r="4.6" fill="#fff" stroke="#1a2a8c" stroke-width="1.1"/><circle cx="391" cy="786" r="2.2" fill="#f0a030"/>
<rect x="369" y="793" width="11" height="11" fill="#f5c400"/><use href="#ibeamb" x="388" y="799"/>
<rect x="369" y="809" width="11" height="11" fill="#b87070"/><use href="#ibeamb" x="388" y="815"/>
<text x="399" y="787">CHS 355.6x8.0</text><text x="399" y="803">HE 360 A</text><text x="399" y="819">HE 220 A</text>
<text x="514" y="787">1,2</text><text x="514" y="803">3-10,13,14,18,20</text><text x="514" y="819">21-41</text>
<rect x="653" y="777" width="11" height="11" fill="#c8fbff"/><rect x="653" y="793" width="11" height="11" fill="#c8fbff"/><rect x="653" y="809" width="11" height="11" fill="#c8fbff"/>
<text x="669" y="787" textLength="170">1 - S235 | Isotropic | Linear Elastic</text><text x="669" y="803" textLength="170">1 - S235 | Isotropic | Linear Elastic</text><text x="669" y="819" textLength="170">1 - S235 | Isotropic | Linear Elastic</text>
<g text-anchor="end">
<text x="901" y="787">87.40</text><text x="948" y="787">43.85</text><text x="998" y="787">43.85</text><text x="1064" y="787">26400.00</text><text x="1127" y="787">13200.00</text><text x="1215" y="787">13200.00</text>
<text x="901" y="803">142.80</text><text x="948" y="803">88.30</text><text x="998" y="803">33.29</text><text x="1064" y="803">148.80</text><text x="1127" y="803">33090.00</text><text x="1215" y="803">7890.00</text>
<text x="901" y="819">64.30</text><text x="948" y="819">40.93</text><text x="998" y="819">13.67</text><text x="1064" y="819">28.46</text><text x="1127" y="819">5410.00</text><text x="1215" y="819">1950.00</text>
</g></g>
<rect x="1183" y="733" width="17" height="121" fill="#f0f0f0"/><rect x="1184" y="750" width="16" height="30" fill="#cdcdcd"/>
<path d="M1187 745L1191 741L1195 745M1187 827L1191 831L1195 827" stroke="#555" stroke-width="1.6" fill="none"/>
<rect x="304" y="838" width="879" height="15" fill="#f0f0f0"/><rect x="322" y="838" width="70" height="15" fill="#cdcdcd"/>
<path d="M316 842L312 846L316 850M1172 842L1176 846L1172 850" stroke="#555" stroke-width="1.6" fill="none"/>
<path d="M304 853.5H1200M304.5 733V854" stroke="#c8c8c8"/>

<!-- tabs -->
<path d="M309 861V869" stroke="#555" stroke-width="1.4"/><path d="M317 861V869L311 865z" fill="#555"/><path d="M333 861V869L327 865z" fill="#555"/>
<text x="352" y="870" textLength="29">2 of 5</text>
<path d="M401 861V869L407 865z" fill="#555"/><path d="M417 861V869L423 865z" fill="#555"/><path d="M424 861V869" stroke="#555" stroke-width="1.4"/>
<g fill="#eeeeee" stroke="#cfcfcf"><rect x="429.5" y="854.5" width="63" height="20"/><rect x="555.5" y="854.5" width="59" height="20"/><rect x="615.5" y="854.5" width="62" height="20"/><rect x="678.5" y="854.5" width="82" height="20"/></g>
<rect x="493" y="854" width="62" height="22" fill="#fff"/><path d="M493 876.5H555" stroke="#c8c8c8"/>
<text x="461" y="869" class="c">Materials</text><text x="524" y="870" class="c">Sections</text><text x="585" y="869" class="c">Nodes</text><text x="646" y="869" class="c">Members</text><text x="719" y="869" class="c">Member Sets</text>

<!-- status bar -->
<rect x="379" y="882" width="33" height="18" fill="#e8e8e8"/><rect x="492" y="882" width="44" height="18" fill="#e8e8e8"/>
<path d="M378.5 881V900M536.5 881V900M626.5 881V900M888.5 881V900M954.5 881V900M1030.5 881V900M1106.5 881V900M1182.5 881V900" stroke="#d4d4d4"/>
<text x="382" y="894" textLength="27">SNAP</text><text x="419" y="894" textLength="25">GRID</text><text x="455" y="894" textLength="30">LGRID</text><text x="496" y="894" textLength="36">OSNAP</text>
<text x="737" y="894">CS: Global XYZ</text><text x="893" y="894">Plane: XY</text>
<g fill="#aaa"><rect x="1196" y="896" width="2" height="2"/><rect x="1192" y="896" width="2" height="2"/><rect x="1188" y="896" width="2" height="2"/><rect x="1196" y="892" width="2" height="2"/><rect x="1192" y="892" width="2" height="2"/><rect x="1196" y="888" width="2" height="2"/></g>
</svg>
</body></html>
